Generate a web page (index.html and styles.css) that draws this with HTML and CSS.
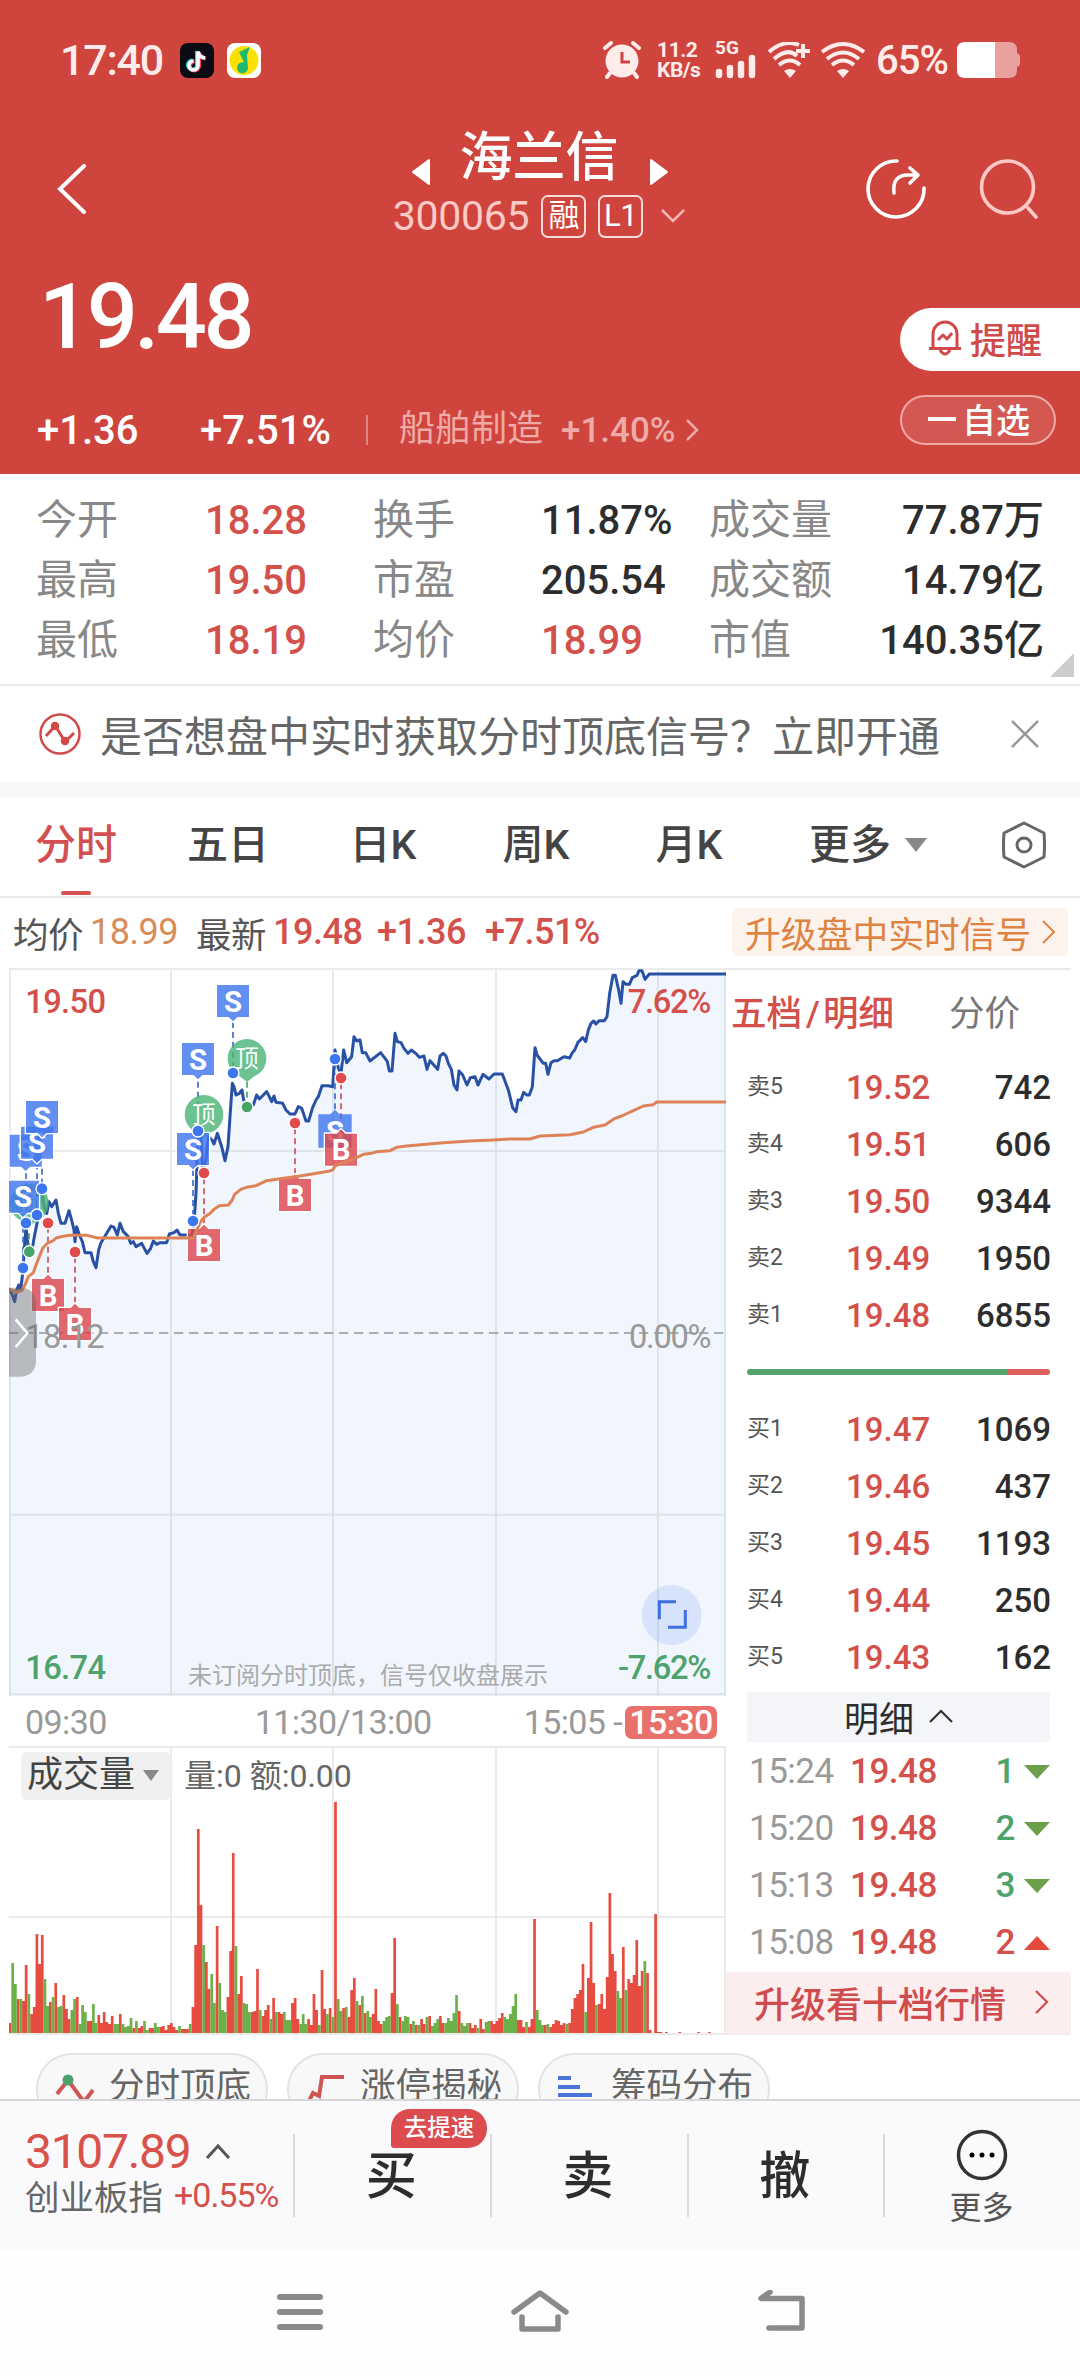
FILE: index.html
```html
<!DOCTYPE html>
<html lang="zh-CN">
<head>
    <meta charset="UTF-8">
    <meta name="viewport" content="width=device-width, initial-scale=1.0">
    <title>海兰信 300065</title>
    <link rel="stylesheet" href="styles.css">
</head>
<body>
    <header class="header">
        <div class="status-bar">
            <span class="clock">17:40</span>
            <svg class="app-icon" width="34" height="35" viewBox="0 0 34 35">
                <rect width="34" height="35" rx="8" fill="#0b0b14"/>
                <path d="M17 8v14a4.500 4.500 0 1 1-4.500-4.500M17 8c.5 4 3 6 7 6.500" fill="none" stroke="#25d8d4" stroke-width="4"/>
                <path d="M19 9v14a4.500 4.500 0 1 1-4.500-4.500M19 9c.5 4 3 6 7 6.500" fill="none" stroke="#f0385c" stroke-width="4"/>
                <path d="M18 8.500v14a4.500 4.500 0 1 1-4.500-4.500M18 8.500c.5 4 3 6 7 6.500" fill="none" stroke="#fff" stroke-width="3.600"/>
            </svg>
            <svg class="app-icon" width="34" height="35" viewBox="0 0 34 35">
                <rect width="34" height="35" rx="8" fill="#fff"/>
                <circle cx="17" cy="17.500" r="14.500" fill="#fbe106"/>
                <path d="M12 9l11-5-3 8 1 13a5.500 5.500 0 1 1-4-5.500z" fill="#1fb871"/>
            </svg>
            <div class="status-right">
                <svg width="38" height="38" viewBox="0 0 38 38" fill="#ffecea">
                    <circle cx="19" cy="20" r="16.500"/>
                    <path d="M2 7l6-5M36 7l-6-5M7 32l-3 4M31 32l3 4" stroke="#ffecea" stroke-width="4" stroke-linecap="round"/>
                    <path d="M19 11v10h8" fill="none" stroke="#cf443d" stroke-width="3"/>
                </svg>
                <div class="net-speed"><span>11.2</span><span>KB/s</span></div>
                <div class="signal">
                    <span>5G</span>
                    <svg width="42" height="25" viewBox="0 0 42 25" stroke="#ffecea" stroke-width="6.500" stroke-linecap="round">
                        <path d="M4 18v3M15 14v7M26 10v11M37 4v17"/>
                    </svg>
                </div>
                <svg class="wifi-plus" width="44" height="36" viewBox="0 0 44 36" fill="none" stroke="#ffecea" stroke-width="4">
                    <path d="M1 10Q16-3 31 3M6 17q14-12 23-3M11 23q11-9 21 0"/>
                    <path d="M28 9h14M35 2v14"/>
                    <path d="M16 29q6-4 12 0l-6 7z" fill="#ffecea" stroke="none"/>
                </svg>
                <svg class="wifi" width="44" height="36" viewBox="0 0 44 36" fill="none" stroke="#ffecea" stroke-width="4">
                    <path d="M1 10q21-16 42 0M6 17q16-13 32 0M11 23q11-9 22 0"/>
                    <path d="M16 29q6-4 12 0l-6 7z" fill="#ffecea" stroke="none"/>
                </svg>
                <span class="battery-text">65%</span>
                <svg width="63" height="36" viewBox="0 0 63 36">
                    <path d="M38 0h14q8 0 8 8v3q3 1 3 4v6q0 3-3 4v3q0 8-8 8h-14z" fill="#e9a09e"/>
                    <path d="M38 0H8Q0 0 0 8v20q0 8 8 8h30z" fill="#fff"/>
                </svg>
            </div>
        </div>

        <div class="title-bar">
            <svg class="back" width="30" height="50" viewBox="0 0 30 50"><path d="M27 2L3 25l24 23" fill="none" stroke="#fff" stroke-width="4" stroke-linecap="round"/></svg>
            <div class="stock">
                <div class="stock-name">
                    <svg width="19" height="28" viewBox="0 0 19 28"><path d="M18 2v24L2 14z" fill="#fff" stroke="#fff" stroke-width="2" stroke-linejoin="round"/></svg>
                    <h1>海兰信</h1>
                    <svg width="19" height="28" viewBox="0 0 19 28"><path d="M1 2v24l16-12z" fill="#fff" stroke="#fff" stroke-width="2" stroke-linejoin="round"/></svg>
                </div>
                <div class="stock-code">
                    <span>300065</span>
                    <span class="tag">融</span>
                    <span class="tag">L1</span>
                    <svg width="26" height="14" viewBox="0 0 26 14"><path d="M2 1l11 11L24 1" fill="none" stroke="#f5b5b2" stroke-width="2.500"/></svg>
                </div>
            </div>
            <div class="title-actions">
                <svg width="60" height="60" viewBox="0 0 60 60" fill="none" stroke="#fff" stroke-width="3.600" stroke-linecap="round" stroke-linejoin="round">
                    <path d="M31 2A28 28 0 1 0 58 29"/>
                    <path d="M28 34q-2-18 14-18h9M44 9l8 7-8 8"/>
                </svg>
                <svg width="60" height="60" viewBox="0 0 60 60" fill="none" stroke="#fcc9c6" stroke-width="3.600" stroke-linecap="round">
                    <circle cx="28.500" cy="28" r="26"/>
                    <path d="M49 49l8 9"/>
                </svg>
            </div>
        </div>

        <div class="price-area">
            <div class="price-main">
                <div class="price">19.48</div>
                <div class="change">
                    <span class="change-value">+1.36</span>
                    <span class="change-rate">+7.51%</span>
                    <i class="sep"></i>
                    <span class="industry">船舶制造</span>
                    <span class="industry-rate">+1.40%</span>
                    <svg width="14" height="24" viewBox="0 0 14 24"><path d="M2 2l10 10L2 22" fill="none" stroke="#eeaaa7" stroke-width="2.500"/></svg>
                </div>
            </div>
            <div class="price-actions">
                <div class="remind">
                    <svg width="34" height="36" viewBox="0 0 34 36" fill="none" stroke="#cf4a48" stroke-width="3" stroke-linejoin="round">
                        <path d="M5 27V14a12 12 0 0 1 24 0v13M1 28.500h32M12 30q5 8 10 0M10 20l5-5 4 4 5-6"/>
                    </svg>
                    <span>提醒</span>
                </div>
                <div class="favorite"><i class="minus"></i><span>自选</span></div>
            </div>
        </div>
    </header>

    <section class="stats">
        <span class="label">今开</span><span class="up">18.28</span>
        <span class="label">换手</span><span>11.87%</span>
        <span class="label">成交量</span><span class="right">77.87万</span>
        <span class="label">最高</span><span class="up">19.50</span>
        <span class="label">市盈</span><span>205.54</span>
        <span class="label">成交额</span><span class="right">14.79亿</span>
        <span class="label">最低</span><span class="up">18.19</span>
        <span class="label">均价</span><span class="up">18.99</span>
        <span class="label">市值</span><span class="right">140.35亿</span>
        <i class="corner"></i>
    </section>

    <section class="notice">
        <svg width="42" height="42" viewBox="0 0 42 42" fill="none" stroke="#cf4a48" stroke-width="2.500">
            <circle cx="21" cy="21" r="19.500"/>
            <path d="M7 23l9-10M17 14l8 13M27 28l8-8" stroke-width="3"/>
            <circle cx="16" cy="13" r="3" fill="#cf4a48"/>
            <circle cx="26" cy="28" r="3" fill="#cf4a48"/>
        </svg>
        <span class="notice-text">是否想盘中实时获取分时顶底信号？立即开通</span>
        <svg width="28" height="28" viewBox="0 0 28 28"><path d="M1 1l26 26M27 1L1 27" stroke="#999" stroke-width="2.500"/></svg>
    </section>

    <nav class="tabs">
        <span class="tab active">分时</span>
        <span class="tab">五日</span>
        <span class="tab">日K</span>
        <span class="tab">周K</span>
        <span class="tab">月K</span>
        <span class="tab more">更多<i class="caret"></i></span>
        <span class="tab">
            <svg width="46" height="48" viewBox="0 0 46 48" fill="none" stroke="#666" stroke-width="3" stroke-linejoin="round">
                <path d="M23 2l20 10q1 12 0 24L23 46 3 36q-1-12 0-24z"/>
                <circle cx="23" cy="24" r="7"/>
            </svg>
        </span>
    </nav>

    <section class="quote-line">
        <span class="dark">均价</span><span class="orange avg">18.99</span>
        <span class="dark">最新</span><span class="last">19.48</span>
        <span class="last-change">+1.36</span><span class="last-rate">+7.51%</span>
        <div class="upgrade">升级盘中实时信号
            <svg width="14" height="24" viewBox="0 0 14 24"><path d="M1 1l11 11L1 23" fill="none" stroke="#de8344" stroke-width="2"/></svg>
        </div>
    </section>

    <main class="board">
        <div class="charts">
            <!-- price chart, three units per pixel -->
            <svg class="price-chart" width="717" height="728" viewBox="27 84 2151 2184">
                <defs>
                    <g id="s">
                        <path d="M-50-50H50V50H14L0 64L-14 50H-50Z" fill="#4076ee" fill-opacity=".82" stroke="#fff" stroke-width="4"/>
                        <text y="32" class="flag">S</text>
                    </g>
                    <g id="b">
                        <path d="M-50-50H-14L0-64L14-50H50V50H-50Z" fill="#db474d" fill-opacity=".82" stroke="#fff" stroke-width="4"/>
                        <text y="32" class="flag">B</text>
                    </g>
                    <g id="top">
                        <path d="M-22 53A58 58 0 1 1 22 53L0 70Z" fill="#4cb478" fill-opacity=".82"/>
                        <text y="25" class="flag top">顶</text>
                    </g>
                    <circle id="ds" r="18" fill="#3b76ef" stroke="#fff" stroke-width="4"/>
                    <circle id="db" r="18" fill="#e04a4b" stroke="#fff" stroke-width="4"/>
                    <circle id="dt" r="18" fill="#48a367" stroke="#fff" stroke-width="4"/>
                </defs>
                <path class="grid" d="M27 87H2178M27 633H2178M27 1724H2178M27 2263H2178M30 84V2268M513 84V2268M999 84V2268M1488 84V2268M1974 84V2268M2175 84V2268"/>
                <path class="zero" d="M27 1179H2175"/>
                <path class="area" d="M28 1045L44 1085L56 1035L68 1000L78 860L87 935L103 890L126 750L140 820L168 780L183 850H195L207 812L222 870L255 938H273L288 983L303 908L333 858L352 885L360 850L392 910L425 910L441 940L460 903L500 908L508 882L531 870L575 890L588 760L594 575L603 590L625 620L652 580L675 662L690 530L697 430L708 465L726 450L740 500L770 465L800 455L828 487L870 522H885L918 543H926L948 480L966 437H998L1005 330L1023 400L1031 330L1055 350L1062 290L1080 300L1087 338L1110 363L1142 338L1168 393H1176L1185 280L1224 340H1247L1272 348L1281 388L1313 388L1330 340L1354 388L1371 450L1377 393L1401 435L1449 403H1507L1548 515L1571 457L1597 440L1605 323L1644 403L1662 362L1709 354L1757 305L1781 243L1821 230L1839 106H1846L1863 190L1869 125H1888L1917 92H1926L1948 102H2178V2268H27Z"/>
                <path class="price-path" d="M28 1045L36 1062L44 1085L50 1050L56 1035L62 1050L68 1000L72 940L78 860L82 900L87 935L96 930L103 890L111 850L118 800L126 750L132 800L140 820L147 785L155 800L168 780L175 820L183 850H195L207 812L216 845L222 870L225 905L230 860L238 885L247 905L255 938H273L280 965L288 983L296 930L303 908L312 893L333 858L342 862L352 885L360 850L370 875L385 890L392 910L400 905L408 920L425 910L441 940L452 925L460 903L470 913L480 908H500L508 882L522 878L531 870L540 885H560L575 890L582 850L588 760L594 575L603 590L608 690L618 660L625 590L636 600L642 612L652 580L665 620L675 662L684 620L690 530L697 430L702 440L708 465L718 460L726 450L731 480L740 500L760 495L770 465L778 477L790 465L800 455L808 470L815 485L822 468L828 487L848 490L858 510L870 522H885L895 500L905 505L918 543H926L937 505L948 480L955 470L966 437H985L998 440L1002 380L1005 330L1015 385L1023 400L1031 330L1040 368L1055 350L1062 290L1070 303L1080 300L1087 338H1097L1110 363L1142 338L1155 355L1162 365L1168 393H1176L1185 280L1192 305L1203 308L1212 325L1224 340L1234 330L1247 340L1258 352L1272 348L1281 388L1290 362L1313 388L1320 348L1330 340L1338 348L1345 370L1354 388L1362 435L1371 450L1377 393L1388 405L1401 435L1411 413L1425 410L1434 435L1449 403L1467 417L1482 402H1507L1525 450L1538 503L1548 515L1554 480H1563L1571 457L1580 465H1588L1597 440L1605 323L1611 345L1630 370H1637L1644 403L1653 368L1662 362H1672L1692 350L1709 354L1717 338L1724 330L1734 307L1748 293L1757 305L1765 270L1773 250L1781 243L1788 252L1797 242H1813L1821 230L1829 160L1839 106H1846L1856 150L1863 190L1869 125L1878 133H1888L1897 113L1911 106L1917 92H1926L1935 118L1948 102H2178"/>
                <path class="link blue" d="M126 596V730M111 670V810M78 700V840M69 830V970M699 246V390M594 425V560M579 690V830M1005 370V510"/>
                <path class="link red" d="M144 860V1000M225 950V1088M612 715V850M885 565V700M1023 430V570"/>
                <path class="link green" d="M741 425V490M87 880V925"/>
                <use href="#top" x="88" y="790"/>
                <use href="#top" x="612" y="524"/>
                <use href="#top" x="741" y="356"/>
                <use href="#s" x="77" y="632"/>
                <use href="#s" x="111" y="608"/>
                <use href="#s" x="126" y="531"/>
                <use href="#s" x="69" y="770"/>
                <use href="#s" x="579" y="627"/>
                <use href="#s" x="594" y="357"/>
                <use href="#s" x="699" y="183"/>
                <g transform="translate(1005 573)">
                    <path d="M-50-50H-14L0-64L14-50H50V50H-50Z" fill="#4076ee" fill-opacity=".82"/>
                    <text y="32" class="flag">S</text>
                </g>
                <use href="#b" x="144" y="1065"/>
                <use href="#b" x="225" y="1152"/>
                <use href="#b" x="612" y="915"/>
                <use href="#b" x="885" y="765"/>
                <use href="#b" x="1023" y="629"/>
                <path class="avg-path" d="M28 1048L50 1056L65 1052L75 1035L85 1010L100 998L108 975L118 950L128 925L142 910L158 903L170 893L190 889L210 886H262L292 894H580L588 875L600 848L612 832L628 822L642 808L658 797L685 795L697 780L703 764L722 748L740 742L768 737L800 722L840 716L900 708L950 700L985 694L998 690L1005 678L1030 668L1055 660L1090 643L1115 640L1130 635L1170 632L1190 622L1220 618L1330 608L1410 603L1480 600L1530 597H1590L1620 588L1710 584L1750 576L1780 562L1815 555L1845 535L1865 528L1900 512L1930 498L1960 494L1970 486H2178"/>
                <use href="#ds" x="69" y="984"/>
                <use href="#ds" x="78" y="849"/>
                <use href="#ds" x="111" y="825"/>
                <use href="#ds" x="126" y="746"/>
                <use href="#dt" x="88" y="935"/>
                <use href="#db" x="144" y="849"/>
                <use href="#db" x="225" y="936"/>
                <use href="#ds" x="579" y="843"/>
                <use href="#ds" x="594" y="573"/>
                <use href="#db" x="612" y="699"/>
                <use href="#ds" x="699" y="399"/>
                <use href="#dt" x="741" y="501"/>
                <use href="#db" x="885" y="549"/>
                <use href="#ds" x="1005" y="357"/>
                <use href="#db" x="1023" y="414"/>
                <text x="76" y="219" class="axis up">19.50</text>
                <text x="2130" y="219" class="axis up end">7.62%</text>
                <text x="76" y="1223" class="axis flat">18.12</text>
                <text x="2130" y="1223" class="axis flat end">0.00%</text>
                <text x="76" y="2218" class="axis down">16.74</text>
                <text x="2130" y="2218" class="axis down end">-7.62%</text>
                <text x="564" y="2231" class="hint">未订阅分时顶底，信号仅收盘展示</text>
                <circle cx="2015" cy="2025" r="90" fill="#4472e8" fill-opacity=".15"/>
                <path d="M1978 2038V1985H2028M2056 2010V2062H2004" fill="none" stroke="#3f70df" stroke-width="9"/>
                <path d="M27 1043H58Q108 1043 108 1093V1260Q108 1310 58 1310H27Z" fill="#666" fill-opacity=".42"/>
                <path d="M47 1138L82 1180L47 1221" fill="none" stroke="#fff" stroke-width="8"/>
            </svg>
            <div class="time-axis">
                <span>09:30</span>
                <span class="noon">11:30/13:00</span>
                <span class="close">15:05 -<b>15:30</b></span>
            </div>
            <div class="volume">
                <svg id="volume" width="717" height="289" viewBox="0 0 717 289">
                    <path class="vgrid" d="M0 1H717M0 171H717M0 288H717M162 0V288M324 0V288M487 0V288M649 0V288M716 0V288"/>
                </svg>
                <div class="volume-head">
                    <span class="volume-name">成交量<i class="caret small"></i></span>
                    <span>量:0 额:0.00</span>
                </div>
            </div>
        </div>

        <aside class="side">
            <div class="side-tabs"><span class="up">五档<i class="slash">/</i>明细</span><span>分价</span></div>
            <div class="level"><span>卖5</span><b>19.52</b><em>742</em></div>
            <div class="level"><span>卖4</span><b>19.51</b><em>606</em></div>
            <div class="level"><span>卖3</span><b>19.50</b><em>9344</em></div>
            <div class="level"><span>卖2</span><b>19.49</b><em>1950</em></div>
            <div class="level"><span>卖1</span><b>19.48</b><em>6855</em></div>
            <div class="ratio"><i></i></div>
            <div class="level"><span>买1</span><b>19.47</b><em>1069</em></div>
            <div class="level"><span>买2</span><b>19.46</b><em>437</em></div>
            <div class="level"><span>买3</span><b>19.45</b><em>1193</em></div>
            <div class="level"><span>买4</span><b>19.44</b><em>250</em></div>
            <div class="level"><span>买5</span><b>19.43</b><em>162</em></div>
            <div class="detail-head">明细
                <svg width="24" height="14" viewBox="0 0 24 14"><path d="M1 13L12 2l11 11" fill="none" stroke="#333" stroke-width="2.200"/></svg>
            </div>
            <div class="tick"><span>15:24</span><b>19.48</b><em class="down">1</em><i class="arrow-down"></i></div>
            <div class="tick"><span>15:20</span><b>19.48</b><em class="down">2</em><i class="arrow-down"></i></div>
            <div class="tick"><span>15:13</span><b>19.48</b><em class="down">3</em><i class="arrow-down"></i></div>
            <div class="tick"><span>15:08</span><b>19.48</b><em class="up">2</em><i class="arrow-up"></i></div>
            <div class="ten-level"><span>升级看十档行情</span>
                <svg width="14" height="24" viewBox="0 0 14 24"><path d="M1 1l11 11L1 23" fill="none" stroke="#d04c4c" stroke-width="2.200"/></svg>
            </div>
        </aside>
    </main>

    <section class="chips">
        <div class="chip">
            <svg width="40" height="34" viewBox="0 0 40 34" fill="none" stroke="#cf5555" stroke-width="4">
                <path d="M2 22L13 8l16 22 9-12"/><circle cx="13" cy="8" r="5.500" fill="#4ba26b" stroke="none"/>
            </svg>
            <span>分时顶底</span>
        </div>
        <div class="chip">
            <svg width="40" height="34" viewBox="0 0 40 34" fill="none" stroke="#cf5555" stroke-width="4">
                <path d="M2 31l5-10 6 3 3-19h22"/>
            </svg>
            <span>涨停揭秘</span>
        </div>
        <div class="chip">
            <svg width="40" height="34" viewBox="0 0 40 34" stroke="#4a74dc" stroke-width="4">
                <path d="M1 6h13M1 15h22M1 23h34M1 32h34"/>
            </svg>
            <span>筹码分布</span>
        </div>
    </section>

    <footer class="trade-bar">
        <div class="index">
            <div class="index-value">3107.89
                <svg width="26" height="15" viewBox="0 0 26 15"><path d="M2 14L13 2l11 12" fill="none" stroke="#555" stroke-width="3"/></svg>
            </div>
            <div class="index-name">创业板指<span>+0.55%</span></div>
        </div>
        <div class="action">买<span class="badge">去提速</span></div>
        <div class="action">卖</div>
        <div class="action">撤</div>
        <div class="action more-action">
            <svg width="52" height="52" viewBox="0 0 52 52">
                <circle cx="26" cy="26" r="23.500" fill="none" stroke="#333" stroke-width="3.500"/>
                <circle cx="16" cy="26" r="2.500"/><circle cx="26" cy="26" r="2.500"/><circle cx="36" cy="26" r="2.500"/>
            </svg>
            <span>更多</span>
        </div>
    </footer>

    <div class="system-nav">
        <svg width="46" height="44" viewBox="0 0 46 44" stroke="#8a8a8a" stroke-width="6" stroke-linecap="round"><path d="M3 7h40M3 22h40M3 37h40"/></svg>
        <svg width="60" height="44" viewBox="0 0 60 44" fill="none" stroke="#8a8a8a" stroke-width="5.500" stroke-linecap="round" stroke-linejoin="round"><path d="M4 22L30 3l26 19M12 27v12h36V27"/></svg>
        <svg width="50" height="44" viewBox="0 0 50 44" fill="none" stroke="#8a8a8a" stroke-width="5.500" stroke-linecap="round" stroke-linejoin="round"><path d="M14 2L5 8.500h41V38H13"/></svg>
    </div>

    <script src="volume.js"></script>
</body>
</html>
```
FILE: styles.css
```css
* {
    box-sizing: border-box;
}
body {
    margin: 0;
    width: 1080px;
    height: 2376px;
    overflow: hidden;
    background: #fff;
    color: #2d2d2d;
    font-family: Roboto, "Noto Sans CJK SC", sans-serif;
}
svg {
    display: block;
    flex: none;
}
i, em {
    font-style: normal;
}
b {
    font-weight: 500;
}
.up {
    color: #d3504b;
}
.down {
    color: #4ea26b;
}

/* header */
.header {
    height: 474px;
    background: #cf443d;
    color: #fff;
}
.status-bar {
    display: flex;
    align-items: center;
    height: 120px;
    padding: 0 60px;
    color: #ffecea;
}
.clock {
    width: 120px;
    font-size: 43px;
    letter-spacing: -1.2px;
    font-weight: 500;
}
.app-icon {
    margin-right: 13px;
}
.status-right {
    display: flex;
    align-items: center;
    margin-left: auto;
}
.net-speed {
    display: flex;
    flex-direction: column;
    width: 44px;
    margin-left: 16px;
    font-size: 21px;
    letter-spacing: -0.5px;
    line-height: 20px;
    font-weight: 700;
}
.signal {
    width: 44px;
    margin-left: 14px;
    font-size: 19px;
    line-height: 13px;
    font-weight: 700;
}
.wifi-plus, .wifi {
    margin-left: 9px;
}
.battery-text {
    margin: 0 9px 0 11px;
    font-size: 40px;
    font-weight: 500;
    letter-spacing: -1px;
}
.title-bar {
    display: flex;
    justify-content: space-between;
    height: 124px;
    padding: 0 41px 0 57px;
}
.back {
    margin-top: 44px;
}
.stock {
    width: 400px;
    margin-left: 126px;
}
.stock-name {
    display: flex;
    justify-content: center;
    gap: 30px;
    height: 72px;
    padding-top: 8px;
}
.stock-name svg {
    margin-top: 30px;
}
h1 {
    margin: 0;
    width: 160px;
    font-size: 53px;
    line-height: 60px;
    font-weight: 500;
}
.stock-code {
    display: flex;
    align-items: center;
    justify-content: center;
    height: 48px;
    font-size: 41px;
    letter-spacing: -0.3px;
    color: #fcc9c6;
}
.stock-code .tag {
    width: 45px;
    height: 43px;
    margin-left: 12px;
    border: 2px solid #f8dcda;
    border-radius: 7px;
    font-size: 31px;
    line-height: 38px;
    text-align: center;
    color: #fff;
}
.stock-code svg {
    margin-left: 17px;
}
.title-actions {
    display: flex;
    gap: 53px;
    padding-top: 39px;
}
.price-area {
    display: flex;
    justify-content: space-between;
    height: 230px;
}
.price-main {
    width: 800px;
    padding-left: 37px;
}
.price {
    height: 143px;
    padding-left: 2px;
    font-size: 90px;
    line-height: 148px;
    font-weight: 500;
    letter-spacing: -3.5px;
}
.change {
    display: flex;
    align-items: center;
    height: 86px;
    font-size: 40px;
    font-weight: 500;
}
.change-value {
    width: 163px;
}
.change-rate {
    width: 166px;
}
.sep {
    width: 2px;
    height: 30px;
    margin-right: 31px;
    background: #e08682;
}
.industry {
    width: 162px;
    font-size: 36px;
    line-height: 40px;
    padding-bottom: 3px;
    font-weight: 400;
    color: #eeaaa7;
}
.industry-rate {
    width: 124px;
    font-size: 35px;
    color: #eeaaa7;
}
.price-actions {
    width: 180px;
    padding-top: 64px;
}
.remind {
    display: flex;
    align-items: center;
    gap: 8px;
    height: 63px;
    padding: 0 0 3px 28px;
    border-radius: 32px 0 0 32px;
    background: #fff;
    color: #cf4a48;
    font-size: 36px;
    font-weight: 500;
}
.favorite {
    display: flex;
    align-items: center;
    gap: 6px;
    width: 156px;
    height: 50px;
    margin-top: 24px;
    padding: 0 0 3px 26px;
    border: 2px solid #eeaaa7;
    border-radius: 25px;
    background: #d35851;
    font-size: 34px;
    font-weight: 500;
}
.minus {
    width: 28px;
    height: 4px;
    background: #fff;
}

/* key figures */
.stats {
    position: relative;
    display: grid;
    grid-template-columns: 169px 168px 168px 168px 130px 205px;
    grid-auto-rows: 60px;
    height: 212px;
    padding: 17px 36px 0;
    border-bottom: 2px solid #e9e9e9;
    font-size: 40px;
    line-height: 60px;
    font-weight: 500;
}
.stats .label {
    font-size: 41px;
    line-height: 58px;
    font-weight: 400;
    color: #888;
}
.stats .right {
    text-align: right;
}
.corner {
    position: absolute;
    right: 6px;
    bottom: 7px;
    border-bottom: 24px solid #ccc;
    border-left: 24px solid transparent;
}

.notice {
    display: flex;
    align-items: center;
    height: 111px;
    padding: 0 41px 0 39px;
    border-bottom: 15px solid #f7f7f7;
}
.notice-text {
    flex: 1;
    margin-left: 19px;
    padding-bottom: 2px;
    font-size: 42px;
    white-space: nowrap;
    color: #666;
}

/* period tabs */
.tabs {
    display: grid;
    grid-template-columns: 152px 152px 158px 148px 158px 200px 112px;
    height: 101px;
    border-bottom: 2px solid #e9e9e9;
}
.tab {
    display: flex;
    flex-direction: column;
    align-items: center;
    justify-content: center;
    font-size: 41px;
    font-weight: 500;
    line-height: 60px;
    padding-bottom: 3px;
    color: #444;
}
.tab.active {
    color: #d34f50;
}
.tab.active::after {
    content: "";
    width: 30px;
    height: 4px;
    margin: 16px 0 -20px;
    border-radius: 2px;
    background: #d34f50;
}
.tab.more {
    flex-direction: row;
    gap: 14px;
}
.caret {
    border-top: 14px solid #888;
    border-left: 11px solid transparent;
    border-right: 11px solid transparent;
}
.caret.small {
    border-top-width: 11px;
    border-left-width: 8px;
    border-right-width: 8px;
}

.quote-line {
    display: flex;
    align-items: center;
    height: 70px;
    padding: 0 12px 2px 13px;
    font-size: 36px;
    letter-spacing: -0.5px;
    color: #d3504b;
    white-space: nowrap;
}
.quote-line .dark {
    width: 77px;
    font-size: 35.5px;
    color: #555;
}
.quote-line .avg {
    width: 106px;
    color: #d68d59;
}
.last, .last-change, .last-rate {
    font-weight: 500;
}
.last {
    width: 104px;
}
.last-change {
    width: 108px;
}
.upgrade {
    display: flex;
    align-items: center;
    justify-content: space-between;
    width: 336px;
    height: 48px;
    margin-left: auto;
    padding: 0 12px 0 13px;
    border-radius: 6px;
    background: #fdf3ed;
    color: #de8344;
    font-size: 35.8px;
    letter-spacing: 0;
}

/* charts */
.board {
    display: flex;
    width: 1062px;
    height: 1067px;
    margin-left: 9px;
}
.charts {
    width: 717px;
}
.grid, .vgrid {
    fill: none;
    stroke: #ebebeb;
    stroke-width: 6;
}
.vgrid {
    stroke-width: 2;
}
.zero {
    fill: none;
    stroke: #999;
    stroke-width: 5;
    stroke-dasharray: 28 17;
}
.area {
    fill: #4283f3;
    fill-opacity: 0.075;
}
.price-path, .avg-path {
    fill: none;
    stroke: #2850a4;
    stroke-width: 9;
    stroke-linejoin: round;
}
.avg-path {
    stroke: #dd8357;
}
.link {
    fill: none;
    stroke-width: 5;
    stroke-dasharray: 18 12;
}
.link.blue {
    stroke: #3b6cc9;
}
.link.red {
    stroke: #d04c59;
}
.link.green {
    stroke: #48a367;
}
.flag {
    fill: #fff;
    font-size: 88px;
    font-weight: 700;
    text-anchor: middle;
}
.flag.top {
    font-size: 70px;
    font-weight: 400;
}
.axis {
    font-size: 98px;
    font-weight: 500;
    letter-spacing: -2px;
}
.axis.up {
    fill: #d3504b;
}
.axis.down {
    fill: #4ea26b;
}
.axis.flat {
    fill: #999;
    font-weight: 400;
}
.end {
    text-anchor: end;
    letter-spacing: -4px;
}
.hint {
    font-size: 72px;
    fill: #aaa;
}
.time-axis {
    display: flex;
    align-items: center;
    justify-content: space-between;
    height: 50px;
    padding: 2px 9px 0 16px;
    font-size: 34px;
    letter-spacing: -0.6px;
    color: #999;
}
.noon {
    padding-left: 56px;
}
.close {
    display: flex;
    align-items: center;
    white-space: pre;
}
.close b {
    width: 92px;
    height: 33px;
    margin-left: 3px;
    border-radius: 7px;
    background: #e9716c;
    color: #fff;
    line-height: 33px;
    text-align: center;
}
.volume {
    position: relative;
}
.volume-head {
    position: absolute;
    top: 6px;
    left: 12px;
    display: flex;
    align-items: center;
    gap: 13px;
    font-size: 32px;
    line-height: 44px;
    color: #666;
}
.volume-name {
    display: flex;
    align-items: center;
    gap: 8px;
    width: 150px;
    height: 48px;
    padding: 0 0 2px 6px;
    border-radius: 6px;
    background: #f0f0f0;
    font-size: 36px;
    color: #444;
}
.bar-up {
    stroke: #e74c40;
    stroke-width: 2.7;
}
.bar-down {
    stroke: #6cb04a;
    stroke-width: 2.7;
}

/* order book */
.side {
    width: 345px;
    border-top: 2px solid #e9e9e9;
    border-bottom: 2px solid #e9e9e9;
}
.side-tabs {
    display: flex;
    justify-content: space-between;
    height: 89px;
    padding: 0 51px 0 5px;
    font-size: 35.5px;
    line-height: 88px;
    color: #777;
}
.side-tabs .up {
    font-weight: 500;
}
.slash {
    padding: 0 3px 0 4px;
}
.level {
    display: grid;
    grid-template-columns: 99px 100px 105px;
    align-items: center;
    height: 57px;
    padding-left: 21px;
}
.level span {
    font-size: 23px;
    line-height: 28px;
    padding-bottom: 2px;
    color: #555;
}
.level b, .level em {
    font-size: 33px;
    font-weight: 500;
}
.level b, .tick b {
    color: #d3504b;
}
.level em {
    text-align: right;
}
.ratio {
    height: 57px;
    padding: 25px 21px 0;
}
.ratio i {
    display: block;
    height: 6px;
    border-radius: 3px;
    background: linear-gradient(to right, #54a46b 86%, #dc615c 86%);
}
.detail-head {
    display: flex;
    align-items: center;
    justify-content: center;
    gap: 15px;
    height: 50px;
    margin: 6px 21px 0;
    padding-bottom: 2px;
    background: #f4f5f9;
    font-size: 35px;
}
.tick {
    display: grid;
    grid-template-columns: 101px 100px 65px 1fr;
    align-items: center;
    height: 57px;
    padding: 2px 21px 0 23px;
    font-size: 35px;
    letter-spacing: -0.5px;
}
.tick span {
    color: #999;
}
.tick em {
    font-weight: 500;
    text-align: right;
}
.arrow-down, .arrow-up {
    justify-self: end;
    border-left: 13px solid transparent;
    border-right: 13px solid transparent;
}
.arrow-down {
    border-top: 14px solid #6c9f4a;
}
.arrow-up {
    border-bottom: 14px solid #e5493c;
}
.ten-level {
    display: flex;
    align-items: center;
    justify-content: space-between;
    height: 62px;
    margin-top: 2px;
    padding: 0 22px 2px 28px;
    background: #fcedee;
    color: #d04c4c;
    font-size: 36px;
    font-weight: 500;
}

.chips {
    display: flex;
    gap: 19px;
    height: 64px;
    padding: 18px 36px 0;
    overflow: hidden;
}
.chip {
    display: flex;
    flex: none;
    gap: 14px;
    width: 232px;
    height: 72px;
    padding: 11px 0 0 17px;
    border: 2px solid #e3e3e3;
    border-radius: 36px;
    background: #f8f8f8;
    font-size: 35.5px;
    line-height: 40px;
    color: #666;
}
.chip svg {
    margin-top: 6px;
}

/* bottom bars */
.trade-bar {
    display: flex;
    height: 151px;
    border-top: 2px solid #d6d6d8;
    background: #fafafc;
}
.index {
    width: 293px;
    padding: 24px 0 0 25px;
    white-space: nowrap;
}
.index-value {
    display: flex;
    align-items: center;
    gap: 15px;
    height: 52px;
    font-size: 48px;
    letter-spacing: -1.3px;
    color: #d9524a;
}
.index-name {
    display: flex;
    align-items: center;
    gap: 11px;
    height: 40px;
    margin-top: -2px;
    font-size: 34.5px;
    color: #666;
}
.index-name span {
    font-size: 34px;
    letter-spacing: -1px;
    color: #d3504b;
}
.action {
    position: relative;
    flex: 1;
    font-size: 51px;
    line-height: 151px;
    font-weight: 500;
    text-align: center;
}
.action::before {
    content: "";
    position: absolute;
    left: 0;
    top: 33px;
    width: 2px;
    height: 83px;
    background: #d9d9dc;
}
.badge {
    position: absolute;
    left: 98px;
    top: 8px;
    width: 96px;
    height: 39px;
    border-radius: 19px 19px 19px 3px;
    background: #dc4b4e;
    color: #fff;
    font-size: 23.5px;
    line-height: 38px;
}
.more-action {
    display: flex;
    flex-direction: column;
    align-items: center;
    padding-top: 28px;
}
.more-action span {
    margin-top: 6px;
    font-size: 32px;
    line-height: 42px;
    font-weight: 400;
    color: #555;
}
.system-nav {
    display: flex;
    justify-content: space-between;
    height: 126px;
    padding: 40px 274px 0 277px;
    background: #fefefe;
}
```
FILE: volume.js
```js
// one entry per minute: positive = up bar, negative = down bar
const volumes = [
    10, -70, -49, 34, -34, 32, 68, -39, 19, 26,
    99, 69, 98, -54, -27, 31, -36, 50, -26, -27,
    38, 24, 14, -23, -34, 36, -9, -28, -21, 12,
    12, -29, -10, 18, 10, 21, 11, 9, 17, -9,
    -9, 19, -9, -6, -7, -15, 5, -12, 5, 7,
    -12, -3, 5, 5, -10, -6, 6, 7, 3, 8,
    10, 6, 3, -7, 4, 4, 4, -9, 26, 88,
    204, 128, -88, 71, 44, -59, -30, 107, -50, -23,
    -21, 36, 82, 180, -87, 39, 57, -30, -29, -21,
    21, 22, 64, -23, 17, 23, 28, -14, 35, -21,
    21, 19, -21, -13, -13, 30, 35, 14, -9, -19,
    -9, 14, 8, 39, 23, -8, 63, 24, -19, 25,
    -16, 231, -34, -22, 25, -26, 16, 43, 55, -32,
    28, -37, 20, -22, -16, 19, 44, 12, 9, -12,
    -16, -17, 40, 95, -29, 16, -12, -17, -16, 9,
    -12, 8, -8, 14, 9, -16, 17, -7, -10, -14,
    17, 10, -10, -15, -12, -20, -38, 22, -10, -7,
    -10, 10, 5, 8, -5, 14, 4, -11, -12, 12,
    9, 12, 15, 20, -16, -14, -19, -27, -39, 13,
    13, 6, -11, 6, 14, 114, -23, -13, -8, 8,
    -9, 6, 9, 13, 12, 8, 10, -9, 10, 24,
    35, 39, 43, 69, -21, 55, 111, 50, -28, 29,
    39, 24, 56, 140, 79, 62, -42, -35, 86, -43,
    54, 50, 58, 93, 47, 62, -72, 60, 3, 0,
    119, 1, 1, 0, 1, 0, 0, 0, 0, 1,
    0, 0, 0, 0, 0, 0, 1, 0, 0, 0, 1
];

const svg = document.getElementById('volume');
['up', 'down'].forEach(type => {
    let d = '';
    volumes.forEach((v, i) => {
        if (v === 0 || (v > 0) !== (type === 'up')) return;
        d += `M${(1 + i * 2.69).toFixed(2)} 287v${-Math.abs(v)}`;
    });
    const path = document.createElementNS('http://www.w3.org/2000/svg', 'path');
    path.setAttribute('class', 'bar-' + type);
    path.setAttribute('d', d);
    svg.appendChild(path);
});
```
